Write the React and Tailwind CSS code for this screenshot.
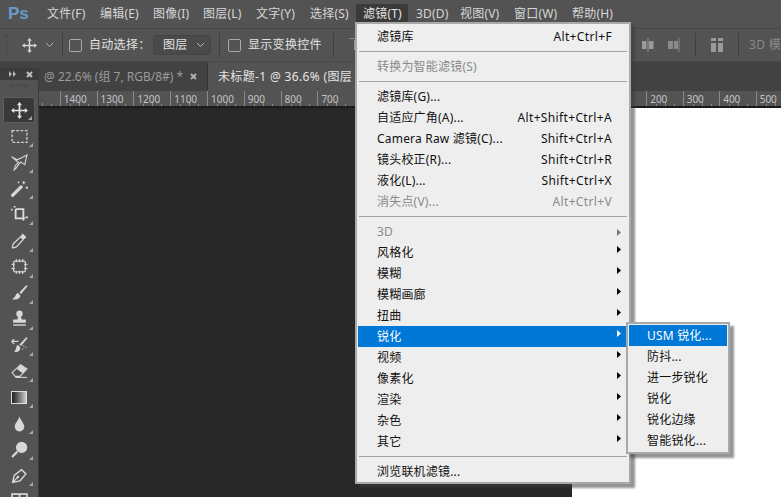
import React from "react";

const FF = "font-['Noto_Sans','Noto_Sans_CJK_SC',sans-serif]";

const menus = [
  ["文件(F)", "w-[62px] pl-[9px]"],
  ["编辑(E)", "w-[53px]"],
  ["图像(I)", "w-[50px]"],
  ["图层(L)", "w-[53px]"],
  ["文字(Y)", "w-[54px]"],
  ["选择(S)", "w-[48px]"],
];
const menus2 = [
  ["3D(D)", "w-[44px]"],
  ["视图(V)", "w-[54px]"],
  ["窗口(W)", "w-[58px]"],
  ["帮助(H)", "w-[50px]"],
];

function Sep() {
  return <div className="h-[1px] bg-[#a3a3a3] ml-[1px] -mr-[1px] my-[4px] shrink-0" />;
}

function Row({ label, shortcut, arrow, disabled, active }) {
  return (
    <div className={`h-[21px] shrink-0 flex items-center pl-[19px] pr-[4px] relative ${active ? "bg-[#0078d7] text-white" : disabled ? "text-[#8a8a8a]" : "text-[#111]"}`}>
      <span className="flex-1 whitespace-nowrap">{label}</span>
      {shortcut && <span className="pr-[10px] whitespace-nowrap tracking-[0.35px]">{shortcut}</span>}
      {arrow && (
        <svg width="4" height="7" viewBox="0 0 4 7" className={`mr-[1px] ${disabled ? "mt-[2px]" : "-mt-[6px]"}`}>
          <path d="M0 0L4 3.5L0 7Z" fill={active ? "#fff" : disabled ? "#777" : "#000"} />
        </svg>
      )}
    </div>
  );
}

function SubMenu() {
  const items = ["USM 锐化...", "防抖...", "进一步锐化", "锐化", "锐化边缘", "智能锐化..."];
  return (
    <div className="absolute left-[626px] top-[322px] w-[104px] h-[132px] bg-[#eeeeee] border-2 border-[#a9a9a9] p-[1px] shadow-[4px_4px_2px_rgba(60,60,60,0.55)] text-[12px] tracking-[0.2px]">
      {items.map((t, i) => (
        <div key={t} className={`h-[21px] flex items-center pl-[18px] whitespace-nowrap ${i === 0 ? "bg-[#0078d7] text-white" : "text-[#111]"}`}>{t}</div>
      ))}
    </div>
  );
}

function FilterMenu() {
  return (
    <div className="absolute left-[355px] top-[22px] w-[276px] h-[462px] bg-[#eeeeee] border-2 border-[#a9a9a9] pl-[1px] pr-[3px] pt-[2px] flex flex-col shadow-[4px_4px_2px_rgba(60,60,60,0.55)] text-[12px] tracking-[0.2px]">
      <Row label="滤镜库" shortcut="Alt+Ctrl+F" />
      <Sep />
      <Row label="转换为智能滤镜(S)" disabled />
      <Sep />
      <Row label="滤镜库(G)..." />
      <Row label="自适应广角(A)..." shortcut="Alt+Shift+Ctrl+A" />
      <Row label="Camera Raw 滤镜(C)..." shortcut="Shift+Ctrl+A" />
      <Row label="镜头校正(R)..." shortcut="Shift+Ctrl+R" />
      <Row label="液化(L)..." shortcut="Shift+Ctrl+X" />
      <Row label="消失点(V)..." shortcut="Alt+Ctrl+V" disabled />
      <Sep />
      <Row label="3D" arrow disabled />
      <Row label="风格化" arrow />
      <Row label="模糊" arrow />
      <Row label="模糊画廊" arrow />
      <Row label="扭曲" arrow />
      <Row label="锐化" arrow active />
      <Row label="视频" arrow />
      <Row label="像素化" arrow />
      <Row label="渲染" arrow />
      <Row label="杂色" arrow />
      <Row label="其它" arrow />
      <Sep />
      <Row label="浏览联机滤镜..." />
    </div>
  );
}

function Check() {
  return <span className="w-[13px] h-[13px] rounded-[2px] border border-[#a8a8a8] bg-[#535353] shrink-0" />;
}
function Div({ cls }) {
  return <span className={`w-[1px] h-[24px] bg-[#3f3f3f] shrink-0 ${cls}`} />;
}
function Move({ size = 16, c = "#d8d8d8" }) {
  return (
    <svg width={size} height={size} viewBox="0 0 16 16">
      <path d="M8 0L10.4 3H8.8V7.2H13V5.6L16 8L13 10.4V8.8H8.8V13H10.4L8 16L5.6 13H7.2V8.8H3V10.4L0 8L3 5.6V7.2H7.2V3H5.6Z" fill={c} />
    </svg>
  );
}
function Chevron({ c = "#b5b5b5" }) {
  return (
    <svg width="9" height="6" viewBox="0 0 9 6"><path d="M1 1L4.5 4.5L8 1" fill="none" stroke={c} strokeWidth="1" /></svg>
  );
}

function OptionsBar() {
  return (
    <div className="h-[34px] bg-[#535353] border-y border-[#484848] flex items-center shrink-0 text-[#e0e0e0] text-[12px] tracking-[0.3px]">
      <span className="w-[3px] h-[20px] ml-[5px] border-x border-dotted border-[#444]" />
      <span className="ml-[14px]"><Move size={15} /></span>
      <span className="ml-[8px]"><Chevron /></span>
      <Div cls="ml-[8px]" />
      <span className="ml-[6px] flex"><Check /></span>
      <span className="ml-[7px] w-[64px] whitespace-nowrap">自动选择：</span>
      <div className="w-[58px] h-[20px] rounded-[3px] border border-[#444] bg-[#4a4a4a] flex items-center pl-[9px] pr-[5px] justify-between">
        <span>图层</span><Chevron />
      </div>
      <Div cls="ml-[8px]" />
      <span className="ml-[8px] flex"><Check /></span>
      <span className="ml-[7px] w-[85px] whitespace-nowrap">显示变换控件</span>
      <Div />
      <svg width="16" height="16" viewBox="0 0 16 16" className="ml-[14px] shrink-0"><rect x="1" y="1" width="15" height="1" fill="#888" /><rect x="6" y="3" width="5" height="10" fill="#999" /></svg>
      <div className="flex-1" />
      <svg width="12" height="16" viewBox="0 0 12 16" className="shrink-0 mr-[14px]"><rect x="0" y="4" width="4.5" height="8" fill="#9a9a9a" /><rect x="7" y="4" width="4.5" height="8" fill="#9a9a9a" /><rect x="5.5" y="1" width="1" height="14" fill="#9a9a9a" /></svg>
      <svg width="12" height="16" viewBox="0 0 12 16" className="shrink-0 mr-[15px]"><rect x="0" y="4" width="5" height="8" fill="#8a8a8a" /><rect x="6" y="4" width="4" height="8" fill="#8a8a8a" /><rect x="10.5" y="1" width="1" height="14" fill="#8a8a8a" /></svg>
      <Div />
      <svg width="12" height="14" viewBox="0 0 12 14" className="ml-[15px] mr-[15px] shrink-0"><rect x="0" y="0" width="5" height="3" fill="#9a9a9a" /><rect x="7" y="0" width="5" height="3" fill="#9a9a9a" /><rect x="0" y="5" width="5" height="9" fill="#9a9a9a" /><rect x="7" y="5" width="5" height="9" fill="#9a9a9a" /></svg>
      <Div />
      <span className="ml-[10px] w-[32px] overflow-hidden whitespace-nowrap text-[#8a8a8a] shrink-0">3D 模式</span>
    </div>
  );
}

function TabBar() {
  return (
    <div className="h-[29px] bg-[#424242] flex shrink-0 text-[12px]">
      <div className="w-[208px] pl-[44px] flex items-center text-[#9c9c9c] border-r border-[#363636] whitespace-nowrap">
        <span>@ 22.6% (组 7, RGB/8#) *</span>
        <svg width="7" height="7" viewBox="0 0 7 7" className="ml-[7px]"><path d="M1 1L6 6M6 1L1 6" stroke="#b0b0b0" strokeWidth="2" /></svg>
      </div>
      <div className="w-[147px] bg-[#535353] pl-[10px] flex items-center text-[#e4e4e4] whitespace-nowrap overflow-hidden tracking-[0.35px]">未标题-1 @ 36.6% (图层</div>
    </div>
  );
}

function Ruler() {
  const left = ["00", "1400", "1300", "1200", "1100", "1000", "900", "800", "700"];
  const right = ["200", "300", "400", "500"];
  const Cell = ({ t, w }) => (
    <div className={`h-full border-l border-[#8a8a8a] pl-[3px] shrink-0 relative leading-[17px] ${w}`}>
      {t}
      <span className="absolute left-[9px] bottom-0 w-[1px] h-[2px] bg-[#8a8a8a]" />
      <span className="absolute left-[18px] bottom-0 w-[1px] h-[3px] bg-[#8a8a8a]" />
      <span className="absolute left-[27px] bottom-0 w-[1px] h-[2px] bg-[#8a8a8a]" />
    </div>
  );
  return (
    <div className="h-[17px] bg-[#535353] border-b-2 border-[#1c1c1c] flex shrink-0 text-[10px] text-[#c4c4c4] overflow-hidden">
      <div className="w-[23px] shrink-0" />
      {left.map((t) => <Cell key={t} t={t} w="w-[36.8px]" />)}
      <div className="w-[292px] shrink-0" />
      {right.map((t) => <Cell key={t} t={t} w="w-[36.5px]" />)}
    </div>
  );
}

const S = { fill: "none", stroke: "#d4d4d4", strokeWidth: 1.4 };
const tools = [
  <svg viewBox="0 0 16 16"><path d="M8 0L10.4 3H8.8V7.2H13V5.6L16 8L13 10.4V8.8H8.8V13H10.4L8 16L5.6 13H7.2V8.8H3V10.4L0 8L3 5.6V7.2H7.2V3H5.6Z" fill="#e2e2e2" /></svg>,
  <svg viewBox="0 0 16 16"><rect x="1" y="2.5" width="14" height="11" fill="none" stroke="#d4d4d4" strokeWidth="1.2" strokeDasharray="2.5 1.5" /></svg>,
  <svg viewBox="0 0 16 16"><path d="M0.5 2.5L6 5.5L15 1L13 10L9 7.5L5 13L3 15L4 11L7 8Z" {...S} strokeWidth="1.1" /></svg>,
  <svg viewBox="0 0 16 16"><path d="M1.5 14.5L9.5 6.5" fill="none" stroke="#d8d8d8" strokeWidth="3" strokeLinecap="round" /><path d="M12 1V4M10.5 2.5H13.5M15 6V8.5M13.8 7.2H16.2M7 1.5V3M6.3 2.2H7.8" stroke="#d8d8d8" strokeWidth="1" /></svg>,
  <svg viewBox="0.5 0.5 16.5 16.5"><path d="M0 4H2M4 0V2M5 3.5V12.5H14M5 3.5H12.5V14.5M14.5 11.5H17" fill="none" stroke="#dcdcdc" strokeWidth="1.8" /></svg>,
  <svg viewBox="0 0 16 16"><path d="M11 1.5L14.5 5L12 7L9 4Z" fill="#dcdcdc" /><path d="M9 4.5L11.5 7L5 14L2 15L1.2 14.2L2.2 11Z" {...S} strokeWidth="1.2" /></svg>,
  <svg viewBox="0 0 16 16"><rect x="2.5" y="3" width="11" height="10" rx="1.5" {...S} strokeWidth="1.2" /><path d="M5 1V4M8 1V4M11 1V4M5 12V15M8 12V15M11 12V15M0.5 6H3.5M0.5 10H3.5M12.5 6H15.5M12.5 10H15.5" stroke="#d4d4d4" strokeWidth="1" /></svg>,
  <svg viewBox="0 0 16 16"><path d="M14.5 1L8 8L9.5 9.5L15.5 2Z" fill="#d8d8d8" /><path d="M6.5 8.5C4 9 5 12.5 1 14C5 15.5 9 13.5 8.7 10.5Z" fill="#d8d8d8" /></svg>,
  <svg viewBox="0 0 16 16"><circle cx="8" cy="3.5" r="3" fill="#d8d8d8" /><path d="M6.5 6H9.5L10 9H14V12H2V9H6Z" fill="#d8d8d8" /><rect x="2" y="13.5" width="12" height="1.3" fill="#d8d8d8" /></svg>,
  <svg viewBox="0 0 16 16"><path d="M14.5 1L8 8L9.5 9.5L15.5 2Z" fill="#d8d8d8" /><path d="M6.5 8.5C4.5 9 5.5 12.5 3 15C7 15.5 9 13.5 8.7 10.5Z" fill="#d8d8d8" /><path d="M0.5 5H7M0.5 5L3 3M0.5 5L3 7.5" fill="none" stroke="#d4d4d4" strokeWidth="1.1" /><path d="M12 9V10M11 12V13M14 10V11" stroke="#d4d4d4" strokeWidth="1" /></svg>,
  <svg viewBox="0 0 16 16"><path d="M1 10L9 2.5L15 6.5L8.5 13.5H4Z" fill="none" stroke="#d8d8d8" strokeWidth="1" /><path d="M9 2.5L15 6.5L11 10.5L5.5 6.5Z" fill="#d8d8d8" /><path d="M4 14.5H15" stroke="#d8d8d8" strokeWidth="1" /></svg>,
  <div className="w-[16px] h-[13px] border border-[#ddd] bg-gradient-to-r from-[#222] to-[#ccc]" />,
  <svg viewBox="0 0 16 16"><path d="M8 1.5C7 5 3.5 8 3.5 11A4.5 4.5 0 0 0 12.5 11C12.5 8 9 5 8 1.5Z" fill="#d8d8d8" /></svg>,
  <svg viewBox="0 0 16 16"><circle cx="10" cy="6" r="5.3" fill="#d8d8d8" /><path d="M6 10L1 15" stroke="#d8d8d8" strokeWidth="2" /></svg>,
  <svg viewBox="0 0 16 16"><path d="M1.5 14.5L3 8L10 2.5L14 6.5L8.5 13Z M1.5 14.5L6 10" fill="none" stroke="#d8d8d8" strokeWidth="1.3" /><circle cx="6.5" cy="9.5" r="1.3" fill="#d8d8d8" /></svg>,
  <svg viewBox="0 0 16 16"><rect x="1" y="1" width="14" height="14" fill="none" stroke="#d8d8d8" strokeWidth="1.6" /><path d="M8 1V15M1 6H15" stroke="#d8d8d8" strokeWidth="1.6" /></svg>,
];

function Toolbar() {
  return (
    <div className="absolute left-0 top-[68px] bottom-0 w-[39px] bg-[#535353] border-r border-[#3c3c3c] flex flex-col overflow-hidden">
      <div className="h-[12px] bg-[#3c3c3c] flex items-center justify-between pl-[9px] pr-[5px] shrink-0">
        <svg width="7" height="6" viewBox="0 0 7 6"><path d="M0 0L3 3L0 6ZM4 0L7 3L4 6Z" fill="#b8b8b8" /></svg>
        <svg width="7" height="7" viewBox="0 0 7 7"><path d="M1 1L6 6M6 1L1 6" stroke="#c0c0c0" strokeWidth="2" /></svg>
      </div>
      <div className="mt-[4px] mx-auto w-[19px] h-[3px] border-y border-dotted border-[#3e3e3e] shrink-0" />
      <div className="mt-[10px] flex flex-col shrink-0">
        {tools.map((icon, i) => (
          <div key={i} className={`h-[26.1px] w-[32px] ml-[3px] relative flex items-center justify-center shrink-0 rounded-[2px] [&>svg]:w-[17px] [&>svg]:h-[17px] ${i === 0 ? "bg-[#383838] border border-[#5f5f5f]" : ""}`}>
            {icon}
            {i < 15 && <span className="absolute right-[2px] bottom-[2px] w-0 h-0 border-l-[4px] border-l-transparent border-b-[4px] border-b-[#aaaaaa]" />}
          </div>
        ))}
      </div>
    </div>
  );
}

export default function App() {
  return (
    <div className={`relative w-[781px] h-[497px] overflow-hidden flex flex-col bg-[#535353] ${FF}`}>
      <div className="h-[28px] bg-[#535353] flex items-center shrink-0 text-[#d6d6d6] text-[12px] tracking-[0.2px]">
        <span className="w-[38px] pl-[8px] text-[#6b9ac7] text-[17px] font-bold font-['Liberation_Sans',sans-serif] tracking-[0px]">Ps</span>
        {menus.map(([t, c]) => <span key={t} className={`${c} whitespace-nowrap`}>{t}</span>)}
        <span className="w-[52px] h-[21px] bg-[#3a3a3a] rounded-t-[2px] flex items-center pl-[7px] -ml-[2px] text-[#e4e4e4] whitespace-nowrap">滤镜(T)</span>
        <span className="w-[8px]" />
        {menus2.map(([t, c]) => <span key={t} className={`${c} whitespace-nowrap`}>{t}</span>)}
      </div>
      <OptionsBar />
      <TabBar />
      <Ruler />
      <div className="flex-1 flex">
        <div className="w-[572px] bg-[#282828]" />
        <div className="flex-1 bg-white" />
      </div>
      <Toolbar />
      <FilterMenu />
      <SubMenu />
    </div>
  );
}
